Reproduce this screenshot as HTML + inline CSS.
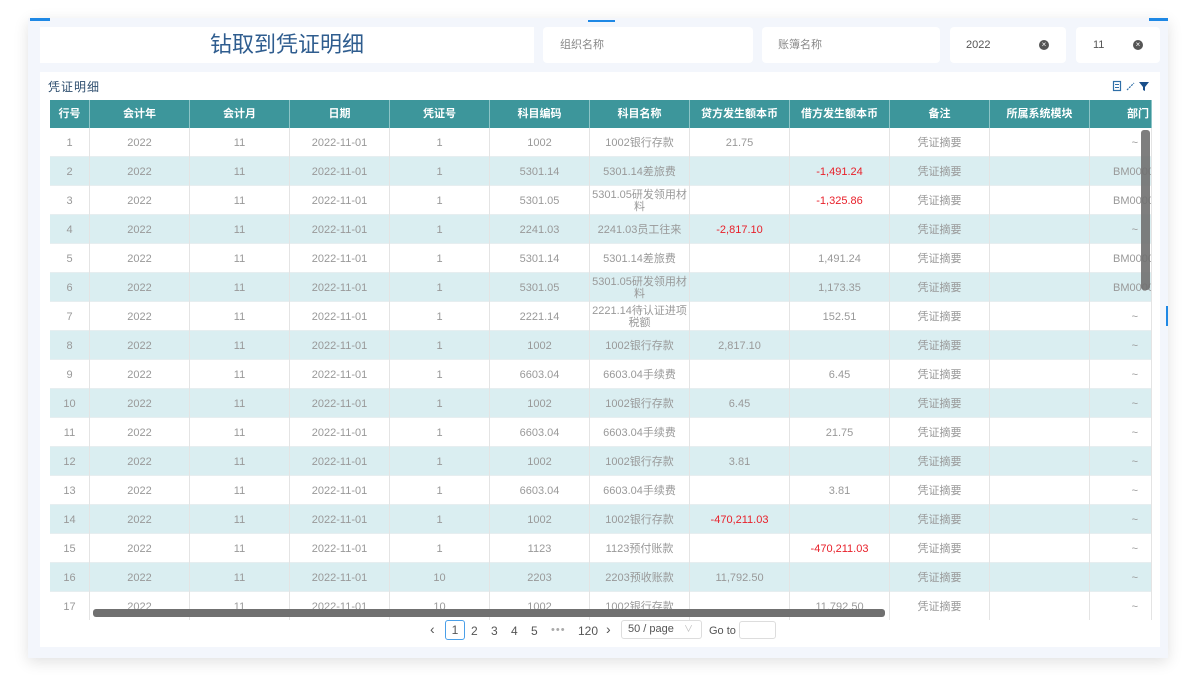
<!DOCTYPE html>
<html><head><meta charset="utf-8"><style>
*{margin:0;padding:0;box-sizing:border-box}
body{width:1200px;height:675px;background:#fff;font-family:"Liberation Sans","Noto Sans CJK SC",sans-serif;position:relative;overflow:hidden}
.page{position:absolute;left:28px;top:18px;width:1140px;height:640px;background:#f3f6fc;box-shadow:0 4px 14px rgba(0,0,0,.12)}
.bm{position:absolute;height:3px;background:#1e88e5}
.box{position:absolute;background:#fff;border-radius:4px;font-size:11px;color:#888}
.title{position:absolute;left:40px;top:27px;width:494px;height:36px;background:#fff;text-align:center;font-size:22px;color:#2f5d8f;line-height:36px}
.panel{position:absolute;left:40px;top:72px;width:1120px;height:575px;background:#fff}
.ptitle{position:absolute;left:48px;top:78px;font-size:12px;color:#2f4f6f;letter-spacing:1px}
.tbl{position:absolute;left:50px;top:100px;width:1102px;height:520px;overflow:hidden}
.row{display:flex;height:29px}
.c{height:29px;border-right:1px solid #e4e4e4;font-size:11px;color:#999;display:flex;align-items:center;justify-content:center;text-align:center;line-height:12px;overflow:hidden;flex:none}
.hd .c{background:#3d969b;color:#fff;font-weight:bold;font-size:11px;border-right:1px solid #8cc4c6;height:28px}
.hd{height:28px}
.a{background:#daeef1}
.row:not(.hd){border-bottom:1px solid #e6eef0}
.r{color:#e8202a}
.w40{width:40px}.w100{width:100px}.w62{width:62px;justify-content:flex-start;padding-left:23px;white-space:nowrap}
.w62.t{justify-content:flex-end;padding-right:13px;padding-left:0}
.hd .w62{justify-content:flex-end;padding-right:2px}
.vs{position:absolute;left:1141px;top:130px;width:9px;height:160px;background:#707070;border-radius:3px;opacity:.9}
.hs{position:absolute;left:93px;top:609px;width:792px;height:8px;background:#707070;border-radius:3px}
.pg{position:absolute;top:624px;font-size:12px;color:#555}
</style></head><body>
<div class="page"></div>
<div class="bm" style="left:30px;top:18px;width:20px"></div>
<div class="bm" style="left:588px;top:20px;width:27px;height:2px"></div>
<div class="bm" style="left:1149px;top:18px;width:19px"></div>
<div class="bm" style="left:1166px;top:306px;width:2px;height:20px"></div>
<div class="title">钻取到凭证明细</div>
<div class="box" style="left:543px;top:27px;width:210px;height:36px;line-height:36px;padding-left:17px">组织名称</div>
<div class="box" style="left:762px;top:27px;width:178px;height:36px;line-height:36px;padding-left:16px">账簿名称</div>
<div class="box" style="left:950px;top:27px;width:116px;height:36px;line-height:36px;padding-left:16px;color:#555">2022<span style="position:absolute;left:89px;top:13px;width:10px;height:10px;border-radius:50%;background:#555;color:#fff;font-size:8px;line-height:10px;text-align:center">×</span></div>
<div class="box" style="left:1076px;top:27px;width:84px;height:36px;line-height:36px;padding-left:17px;color:#555">11<span style="position:absolute;left:57px;top:13px;width:10px;height:10px;border-radius:50%;background:#555;color:#fff;font-size:8px;line-height:10px;text-align:center">×</span></div>
<div class="panel"></div>
<div class="ptitle">凭证明细</div>
<svg style="position:absolute;left:1112px;top:80px" width="42" height="12"><rect x="1.5" y="1.5" width="7" height="9" fill="none" stroke="#2f6fa8" stroke-width="1.2"/><line x1="3" y1="4.5" x2="7" y2="4.5" stroke="#2f6fa8"/><line x1="3" y1="7.5" x2="7" y2="7.5" stroke="#2f6fa8"/><line x1="15" y1="10" x2="22" y2="3" stroke="#2f6fa8" stroke-width="1.2" stroke-dasharray="2 1"/><path d="M27 2h10l-4 5v4l-2-1v-3z" fill="#1a4f8a"/></svg>
<div class="tbl">
<div class="row hd"><div class="c w40">行号</div><div class="c w100">会计年</div><div class="c w100">会计月</div><div class="c w100">日期</div><div class="c w100">凭证号</div><div class="c w100">科目编码</div><div class="c w100">科目名称</div><div class="c w100">贷方发生额本币</div><div class="c w100">借方发生额本币</div><div class="c w100">备注</div><div class="c w100">所属系统模块</div><div class="c w62">部门</div></div>
<div class="row"><div class="c w40">1</div><div class="c w100">2022</div><div class="c w100">11</div><div class="c w100">2022-11-01</div><div class="c w100">1</div><div class="c w100">1002</div><div class="c w100">1002银行存款</div><div class="c w100">21.75</div><div class="c w100"></div><div class="c w100">凭证摘要</div><div class="c w100"></div><div class="c w62 t">~</div></div>
<div class="row a"><div class="c w40">2</div><div class="c w100">2022</div><div class="c w100">11</div><div class="c w100">2022-11-01</div><div class="c w100">1</div><div class="c w100">5301.14</div><div class="c w100">5301.14差旅费</div><div class="c w100"></div><div class="c w100 r">-1,491.24</div><div class="c w100">凭证摘要</div><div class="c w100"></div><div class="c w62">BM0000</div></div>
<div class="row"><div class="c w40">3</div><div class="c w100">2022</div><div class="c w100">11</div><div class="c w100">2022-11-01</div><div class="c w100">1</div><div class="c w100">5301.05</div><div class="c w100">5301.05研发领用材<br>料</div><div class="c w100"></div><div class="c w100 r">-1,325.86</div><div class="c w100">凭证摘要</div><div class="c w100"></div><div class="c w62">BM0000</div></div>
<div class="row a"><div class="c w40">4</div><div class="c w100">2022</div><div class="c w100">11</div><div class="c w100">2022-11-01</div><div class="c w100">1</div><div class="c w100">2241.03</div><div class="c w100">2241.03员工往来</div><div class="c w100 r">-2,817.10</div><div class="c w100"></div><div class="c w100">凭证摘要</div><div class="c w100"></div><div class="c w62 t">~</div></div>
<div class="row"><div class="c w40">5</div><div class="c w100">2022</div><div class="c w100">11</div><div class="c w100">2022-11-01</div><div class="c w100">1</div><div class="c w100">5301.14</div><div class="c w100">5301.14差旅费</div><div class="c w100"></div><div class="c w100">1,491.24</div><div class="c w100">凭证摘要</div><div class="c w100"></div><div class="c w62">BM0000</div></div>
<div class="row a"><div class="c w40">6</div><div class="c w100">2022</div><div class="c w100">11</div><div class="c w100">2022-11-01</div><div class="c w100">1</div><div class="c w100">5301.05</div><div class="c w100">5301.05研发领用材<br>料</div><div class="c w100"></div><div class="c w100">1,173.35</div><div class="c w100">凭证摘要</div><div class="c w100"></div><div class="c w62">BM0000</div></div>
<div class="row"><div class="c w40">7</div><div class="c w100">2022</div><div class="c w100">11</div><div class="c w100">2022-11-01</div><div class="c w100">1</div><div class="c w100">2221.14</div><div class="c w100">2221.14待认证进项<br>税额</div><div class="c w100"></div><div class="c w100">152.51</div><div class="c w100">凭证摘要</div><div class="c w100"></div><div class="c w62 t">~</div></div>
<div class="row a"><div class="c w40">8</div><div class="c w100">2022</div><div class="c w100">11</div><div class="c w100">2022-11-01</div><div class="c w100">1</div><div class="c w100">1002</div><div class="c w100">1002银行存款</div><div class="c w100">2,817.10</div><div class="c w100"></div><div class="c w100">凭证摘要</div><div class="c w100"></div><div class="c w62 t">~</div></div>
<div class="row"><div class="c w40">9</div><div class="c w100">2022</div><div class="c w100">11</div><div class="c w100">2022-11-01</div><div class="c w100">1</div><div class="c w100">6603.04</div><div class="c w100">6603.04手续费</div><div class="c w100"></div><div class="c w100">6.45</div><div class="c w100">凭证摘要</div><div class="c w100"></div><div class="c w62 t">~</div></div>
<div class="row a"><div class="c w40">10</div><div class="c w100">2022</div><div class="c w100">11</div><div class="c w100">2022-11-01</div><div class="c w100">1</div><div class="c w100">1002</div><div class="c w100">1002银行存款</div><div class="c w100">6.45</div><div class="c w100"></div><div class="c w100">凭证摘要</div><div class="c w100"></div><div class="c w62 t">~</div></div>
<div class="row"><div class="c w40">11</div><div class="c w100">2022</div><div class="c w100">11</div><div class="c w100">2022-11-01</div><div class="c w100">1</div><div class="c w100">6603.04</div><div class="c w100">6603.04手续费</div><div class="c w100"></div><div class="c w100">21.75</div><div class="c w100">凭证摘要</div><div class="c w100"></div><div class="c w62 t">~</div></div>
<div class="row a"><div class="c w40">12</div><div class="c w100">2022</div><div class="c w100">11</div><div class="c w100">2022-11-01</div><div class="c w100">1</div><div class="c w100">1002</div><div class="c w100">1002银行存款</div><div class="c w100">3.81</div><div class="c w100"></div><div class="c w100">凭证摘要</div><div class="c w100"></div><div class="c w62 t">~</div></div>
<div class="row"><div class="c w40">13</div><div class="c w100">2022</div><div class="c w100">11</div><div class="c w100">2022-11-01</div><div class="c w100">1</div><div class="c w100">6603.04</div><div class="c w100">6603.04手续费</div><div class="c w100"></div><div class="c w100">3.81</div><div class="c w100">凭证摘要</div><div class="c w100"></div><div class="c w62 t">~</div></div>
<div class="row a"><div class="c w40">14</div><div class="c w100">2022</div><div class="c w100">11</div><div class="c w100">2022-11-01</div><div class="c w100">1</div><div class="c w100">1002</div><div class="c w100">1002银行存款</div><div class="c w100 r">-470,211.03</div><div class="c w100"></div><div class="c w100">凭证摘要</div><div class="c w100"></div><div class="c w62 t">~</div></div>
<div class="row"><div class="c w40">15</div><div class="c w100">2022</div><div class="c w100">11</div><div class="c w100">2022-11-01</div><div class="c w100">1</div><div class="c w100">1123</div><div class="c w100">1123预付账款</div><div class="c w100"></div><div class="c w100 r">-470,211.03</div><div class="c w100">凭证摘要</div><div class="c w100"></div><div class="c w62 t">~</div></div>
<div class="row a"><div class="c w40">16</div><div class="c w100">2022</div><div class="c w100">11</div><div class="c w100">2022-11-01</div><div class="c w100">10</div><div class="c w100">2203</div><div class="c w100">2203预收账款</div><div class="c w100">11,792.50</div><div class="c w100"></div><div class="c w100">凭证摘要</div><div class="c w100"></div><div class="c w62 t">~</div></div>
<div class="row"><div class="c w40">17</div><div class="c w100">2022</div><div class="c w100">11</div><div class="c w100">2022-11-01</div><div class="c w100">10</div><div class="c w100">1002</div><div class="c w100">1002银行存款</div><div class="c w100"></div><div class="c w100">11,792.50</div><div class="c w100">凭证摘要</div><div class="c w100"></div><div class="c w62 t">~</div></div>
</div>
<div class="vs"></div>
<div class="hs"></div>
<div class="pg" style="left:430px;top:621px;font-size:14px">‹</div>
<div style="position:absolute;left:445px;top:620px;width:20px;height:20px;border:1px solid #4a9fe8;border-radius:3px;font-size:12px;color:#555;text-align:center;line-height:18px">1</div>
<div class="pg" style="left:471px">2</div><div class="pg" style="left:491px">3</div><div class="pg" style="left:511px">4</div><div class="pg" style="left:531px">5</div>
<div class="pg" style="left:551px;color:#aaa;letter-spacing:1px;font-size:11px">•••</div>
<div class="pg" style="left:578px">120</div>
<div class="pg" style="left:606px;top:621px;font-size:14px">›</div>
<div style="position:absolute;left:621px;top:620px;width:81px;height:19px;border:1px solid #ddd;border-radius:3px;font-size:11px;color:#555;line-height:17px;padding-left:6px">50 / page<span style="position:absolute;right:8px;top:0;color:#bbb;font-size:9px">∨</span></div>
<div class="pg" style="left:709px;top:625px;font-size:11px">Go to</div>
<div style="position:absolute;left:739px;top:621px;width:37px;height:18px;border:1px solid #ddd;border-radius:3px"></div>
</body></html>
